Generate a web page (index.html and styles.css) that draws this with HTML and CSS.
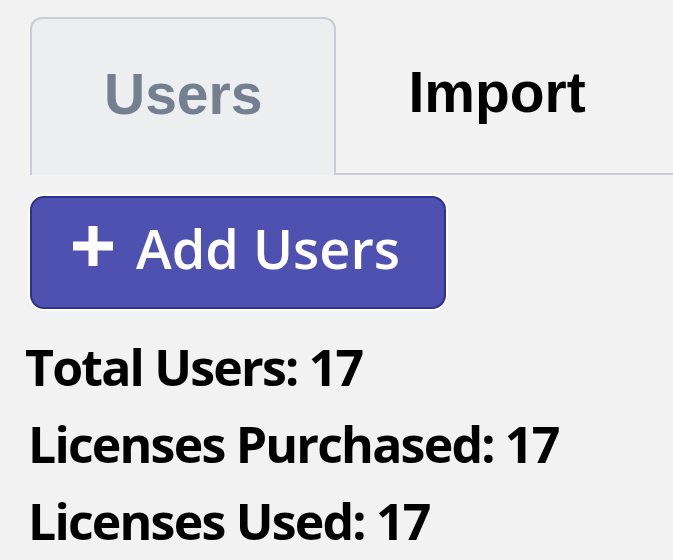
FILE: index.html
```html
<!DOCTYPE html>
<html>
<head>
  <meta charset="UTF-8">
  <title>Users</title>
  <link rel="stylesheet" href="styles.css">
</head>
<body>
  <div class="page">
    <div class="tabs">
      <div class="tab active">Users</div>
      <div class="tab">Import</div>
      <div class="tab-fill"></div>
    </div>

    <button class="btn-add">
      <svg class="plus" width="42" height="42" viewBox="0 0 42 42">
        <path d="M21 1v40M1 21h40" stroke="#fff" stroke-width="9"/>
      </svg>
      <span>Add Users</span>
    </button>

    <div class="stats">
      <div class="stat stat-total">Total Users: 17</div>
      <div class="stat">Licenses Purchased: 17</div>
      <div class="stat">Licenses Used: 17</div>
    </div>
  </div>
</body>
</html>
```

FILE: styles.css
```css
html, body {
  margin: 0;
  background: #f2f2f2;
}
.page {
  padding: 17px 0 0 30px;
  display: flex;
  flex-direction: column;
  align-items: flex-start;
}
.tabs {
  display: flex;
  align-self: stretch;
  height: 158px;
}
.tab {
  padding: 0 72px;
  font-family: "Liberation Sans", Arial, sans-serif;
  font-weight: 700;
  font-size: 57px;
  line-height: 150px;
  color: #000;
  border-bottom: 2px solid #c9cdd3;
}
.tab.active {
  color: #74808f;
  background: #eceef0;
  border: 2px solid #c9cdd3;
  border-bottom: none;
  border-radius: 12px 12px 0 0;
}
.tab-fill {
  flex: 1;
  border-bottom: 2px solid #c9cdd3;
}
.btn-add {
  margin-top: 21px;
  width: 416px;
  height: 113px;
  display: flex;
  align-items: center;
  gap: 22px;
  padding: 0 0 10px 40px;
  background: #4f51b0;
  border: 2px solid #2f318f;
  border-radius: 14px;
  box-shadow: 0 0 0 2px #fff;
  color: #fff;
  font-family: "Open Sans", sans-serif;
  font-weight: 600;
  font-size: 54px;
  cursor: pointer;
}
.plus {
  flex: none;
  margin-top: -4px;
}
.stats {
  margin-top: 20px;
  font-family: "Open Sans", sans-serif;
  font-weight: 700;
  font-size: 50px;
  line-height: 77px;
  letter-spacing: -1.8px;
  color: #000;
}
.stat {
  margin-left: -2px;
}
.stat-total {
  margin-left: -5px;
}
```
